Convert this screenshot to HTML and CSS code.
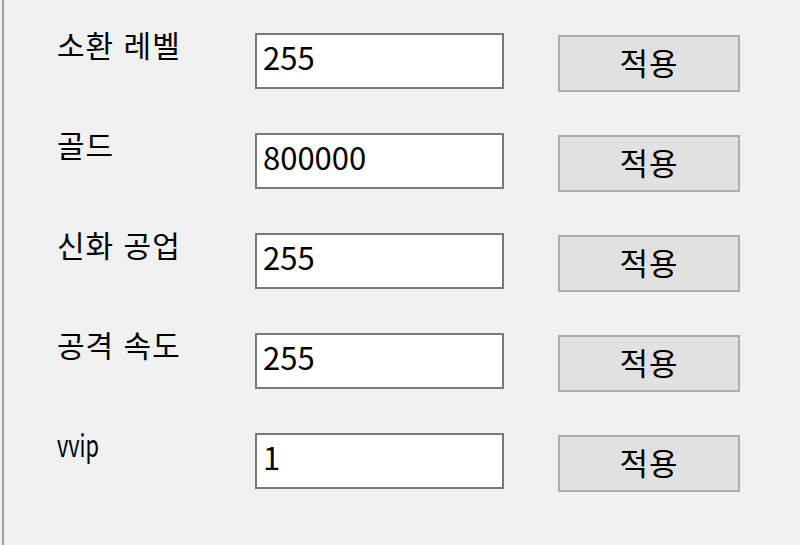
FILE: index.html
```html
<!DOCTYPE html>
<html lang="ko">
<head>
<meta charset="utf-8">
<link rel="stylesheet" href="styles.css">
</head>
<body>
<div class="panel">
  <div class="row">
    <span class="label">소환 레벨</span>
    <input class="field" type="text" value="255">
    <button class="apply">적용</button>
  </div>
  <div class="row">
    <span class="label">골드</span>
    <input class="field" type="text" value="800000">
    <button class="apply">적용</button>
  </div>
  <div class="row">
    <span class="label">신화 공업</span>
    <input class="field" type="text" value="255">
    <button class="apply">적용</button>
  </div>
  <div class="row">
    <span class="label">공격 속도</span>
    <input class="field" type="text" value="255">
    <button class="apply">적용</button>
  </div>
  <div class="row">
    <span class="label"><span class="latin">vvip</span></span>
    <input class="field" type="text" value="1">
    <button class="apply">적용</button>
  </div>
</div>
</body>
</html>
```
FILE: styles.css
```css
html, body {
  margin: 0;
  padding: 0;
  background: #f0f0f0;
  height: 100%;
  overflow: hidden;
}
body {
  font-family: "Noto Sans CJK KR", "Noto Sans", sans-serif;
  color: #000;
}
.panel {
  margin-left: 2px;
  border-left: 2px solid #a0a0a0;
  height: 545px;
  box-sizing: border-box;
  padding: 33px 0 0 53px;
  display: flex;
  flex-direction: column;
}
.row {
  display: grid;
  grid-template-columns: 198px 249px 236px;
  height: 100px;
  align-items: start;
}
.label {
  font-size: 30px;
  line-height: 40px;
  margin-top: -9px;
  white-space: pre;
  letter-spacing: 1px;
}
.latin {
  display: inline-block;
  transform: scaleX(0.7);
  transform-origin: left center;
  letter-spacing: 0;
  font-size: 31px;
}
.field {
  box-sizing: border-box;
  width: 249px;
  height: 56px;
  margin: 0;
  border: 2px solid #7a7a7a;
  background: #fff;
  padding: 0 0 10px 6px;
  font-family: "Noto Sans CJK KR", "Noto Sans", sans-serif;
  font-size: 31px;
  color: #000;
  outline: none;
}
.apply {
  box-sizing: border-box;
  margin: 2px 0 0 54px;
  width: 182px;
  height: 57px;
  border: 2px solid #adadad;
  background: #e1e1e1;
  font-family: "Noto Sans CJK KR", "Noto Sans", sans-serif;
  font-size: 31px;
  letter-spacing: 1px;
  color: #000;
  padding: 0 0 4px;
  border-radius: 0;
}
```
